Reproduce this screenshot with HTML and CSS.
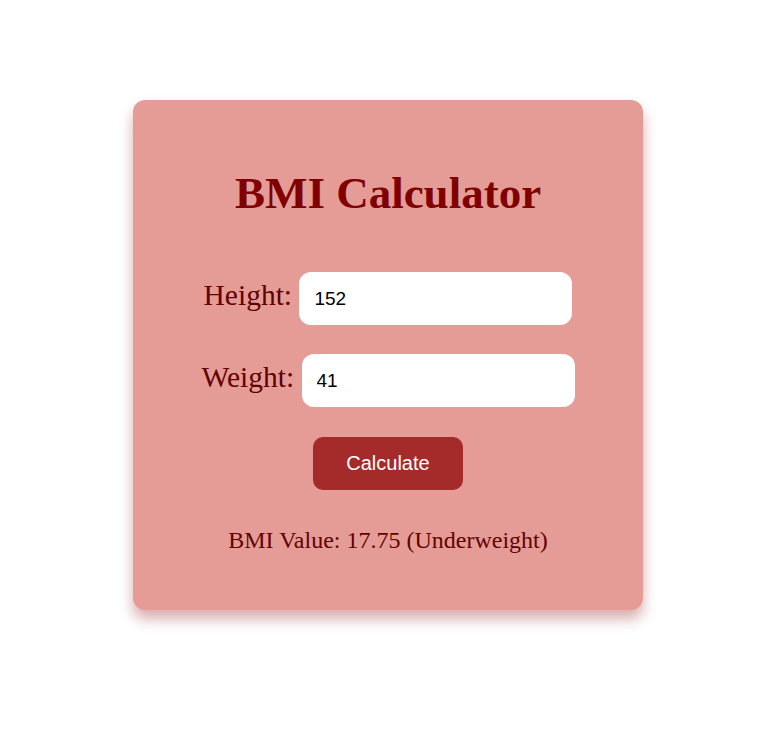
FILE: index.html
```html
<!DOCTYPE html>
<html lang="en">
<head>
<meta charset="utf-8">
<title>BMI Calculator</title>
<link rel="stylesheet" href="styles.css">
</head>
<body>
<div class="page">
  <div class="card">
    <h1 class="title">BMI Calculator</h1>
    <div class="row"><label class="label" for="h">Height:</label> <input class="field" id="h" type="text" value="152"></div>
    <div class="row row-weight"><label class="label" for="w">Weight:</label> <input class="field" id="w" type="text" value="41"></div>
    <div class="actions"><button class="btn" type="button">Calculate</button></div>
    <p class="result">BMI Value: 17.75 (Underweight)</p>
  </div>
</div>
</body>
</html>
```
FILE: styles.css
```css
html, body {
  margin: 0;
  padding: 0;
  background: #ffffff;
}

.page {
  box-sizing: border-box;
  min-height: 100vh;
  display: flex;
  justify-content: center;
  align-items: flex-start;
  padding: 100px 4px 0 0;
}

.card {
  box-sizing: border-box;
  width: 510px;
  height: 510px;
  padding: 68px 0 0;
  background: #e59c96;
  border-radius: 12px;
  box-shadow: 0 9px 14px rgba(160, 50, 50, 0.4);
  text-align: center;
  font-family: "Liberation Serif", "Times New Roman", serif;
}

.title {
  margin: 0 0 54px;
  font-size: 45px;
  line-height: 50px;
  font-weight: bold;
  color: #800000;
}

.row {
  font-size: 29.5px;
  line-height: normal;
  color: #620000;
  height: 53px;
}

.row-weight {
  margin-top: 29px;
}

.label {
  color: #620000;
}

.field {
  box-sizing: border-box;
  width: 273px;
  height: 53px;
  padding: 0 15px;
  border: none;
  border-radius: 12px;
  background: #ffffff;
  font-family: "Liberation Sans", Arial, sans-serif;
  font-size: 19px;
  color: #000000;
  outline: none;
  vertical-align: baseline;
}

.actions {
  margin-top: 30px;
  height: 53px;
}

.btn {
  box-sizing: border-box;
  width: 150px;
  height: 53px;
  border: none;
  border-radius: 10px;
  background: #a52a2a;
  color: #ffffff;
  font-family: "Liberation Sans", Arial, sans-serif;
  font-size: 20px;
  padding: 0;
  cursor: pointer;
}

.result {
  margin: 37px 0 0;
  font-size: 24px;
  line-height: normal;
  color: #620000;
}
```
